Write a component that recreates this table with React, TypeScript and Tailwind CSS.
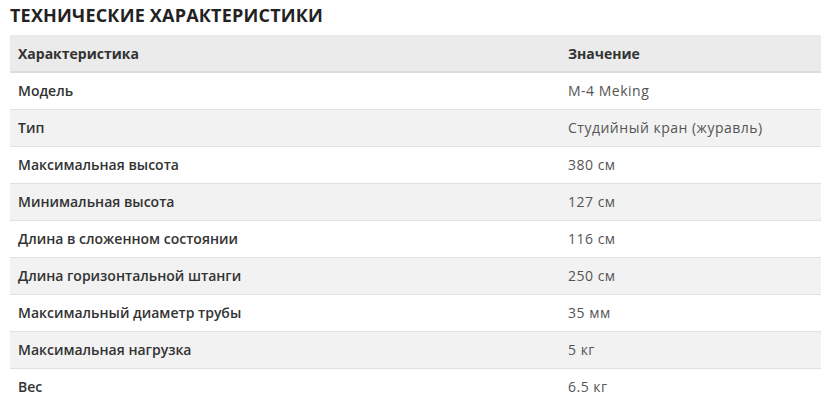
import React from "react";

const specs = [
  { name: "Модель", value: "M-4 Meking" },
  { name: "Тип", value: "Студийный кран (журавль)" },
  { name: "Максимальная высота", value: "380 см" },
  { name: "Минимальная высота", value: "127 см" },
  { name: "Длина в сложенном состоянии", value: "116 см" },
  { name: "Длина горизонтальной штанги", value: "250 см" },
  { name: "Максимальный диаметр трубы", value: "35 мм" },
  { name: "Максимальная нагрузка", value: "5 кг" },
  { name: "Вес", value: "6.5 кг" },
];

const App = () => {
  return (
    <div className="min-h-screen bg-white pl-[10px] pr-px pt-[3px] font-['Open_Sans',sans-serif]">
      <h2 className="text-[18px] font-bold leading-[25px] tracking-[0.2px] text-[#222] mb-[7px]">
        ТЕХНИЧЕСКИЕ ХАРАКТЕРИСТИКИ
      </h2>

      <table className="w-full border-collapse text-[14px]">
        <thead>
          <tr className="bg-[#ebebeb] border-b-2 border-[#dcdcdc]">
            <th className="h-[37px] px-2 text-left font-bold text-[#333] w-[550px]">Характеристика</th>
            <th className="h-[37px] px-2 text-left font-bold text-[#333]">Значение</th>
          </tr>
        </thead>
        <tbody>
          {specs.map((row, i) => (
            <tr
              key={row.name}
              className={`border-[#e0e0e0] ${i < specs.length - 1 ? "border-b" : ""} ${i % 2 === 1 ? "bg-[#f2f2f2]" : "bg-white"}`}
            >
              <td className="h-[37px] px-2 font-semibold text-[#333]">{row.name}</td>
              <td className="h-[37px] px-2 tracking-[0.5px] text-[#555]">{row.value}</td>
            </tr>
          ))}
        </tbody>
      </table>
    </div>
  );
};

export default App;
